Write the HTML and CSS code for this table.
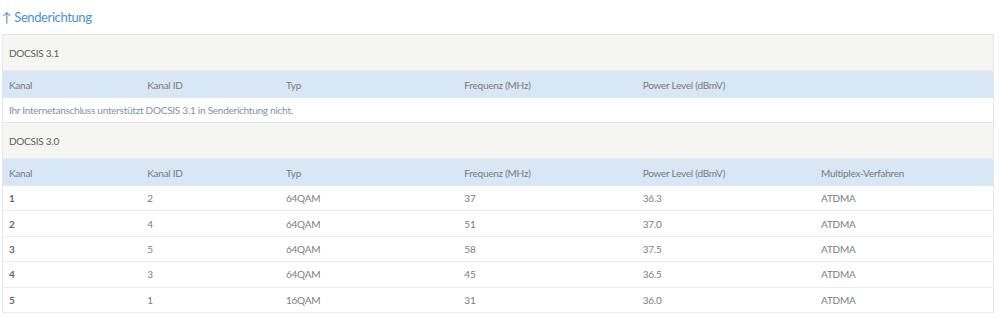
FILE: index.html
```html
<!DOCTYPE html>
<html lang="de">
<head>
  <meta charset="UTF-8" />
  <title>Senderichtung</title>
  <link rel="stylesheet" href="styles.css">
</head>
<body>
  <h2 class="section-title">↑ Senderichtung</h2>

  <table class="channels">
    <colgroup>
      <col class="c-narrow"><col class="c-narrow">
      <col class="c-wide"><col class="c-wide"><col class="c-wide"><col class="c-wide">
    </colgroup>

    <tr class="group"><td colspan="6">DOCSIS 3.1</td></tr>
    <tr class="head">
      <td>Kanal</td><td>Kanal ID</td><td>Typ</td><td>Frequenz (MHz)</td><td>Power Level (dBmV)</td><td></td>
    </tr>
    <tr class="info"><td colspan="6">Ihr Internetanschluss unterstützt DOCSIS 3.1 in Senderichtung nicht.</td></tr>

    <tr class="group"><td colspan="6">DOCSIS 3.0</td></tr>
    <tr class="head">
      <td>Kanal</td><td>Kanal ID</td><td>Typ</td><td>Frequenz (MHz)</td><td>Power Level (dBmV)</td><td>Multiplex-Verfahren</td>
    </tr>
    <tr class="row"><td class="num">1</td><td>2</td><td>64QAM</td><td>37</td><td>36.3</td><td>ATDMA</td></tr>
    <tr class="row"><td class="num">2</td><td>4</td><td>64QAM</td><td>51</td><td>37.0</td><td>ATDMA</td></tr>
    <tr class="row"><td class="num">3</td><td>5</td><td>64QAM</td><td>58</td><td>37.5</td><td>ATDMA</td></tr>
    <tr class="row"><td class="num">4</td><td>3</td><td>64QAM</td><td>45</td><td>36.5</td><td>ATDMA</td></tr>
    <tr class="row"><td class="num">5</td><td>1</td><td>16QAM</td><td>31</td><td>36.0</td><td>ATDMA</td></tr>
  </table>
</body>
</html>
```

FILE: styles.css
```css
body {
  font-family: Lato, "Open Sans", sans-serif;
  background: #fff;
  margin: 0;
  padding: 0 5px 0 2px;
  color: #666;
}

.section-title {
  font-size: 13px;
  font-weight: normal;
  letter-spacing: -0.4px;
  color: #4a90d9;
  margin: 0;
  padding: 8px 0 8px 0;
  line-height: 18px;
}

.channels {
  width: 100%;
  border-collapse: collapse;
  border: 1px solid #e6e6e6;
  font-size: 10px;
  letter-spacing: -0.25px;
  table-layout: fixed;
}

.c-narrow { width: 14%; }
.c-wide { width: 18%; }

.channels td {
  padding: 0 6px;
  text-align: left;
  white-space: nowrap;
}

.group td {
  background: #f5f5f3;
  color: #5c5c5c;
  height: 35px;
  border-bottom: 1px solid #ececec;
}

.head td {
  background: #d7e7f5;
  color: #7a7a7a;
  height: 27px;
}

.info td {
  color: #7f93a3;
  height: 24px;
  border-bottom: 1px solid #e6e6e6;
}

.row td {
  color: #7d7d7d;
  height: 24.4px;
  border-bottom: 1px solid #ececec;
}

.row .num {
  font-weight: bold;
  color: #666;
}
```
